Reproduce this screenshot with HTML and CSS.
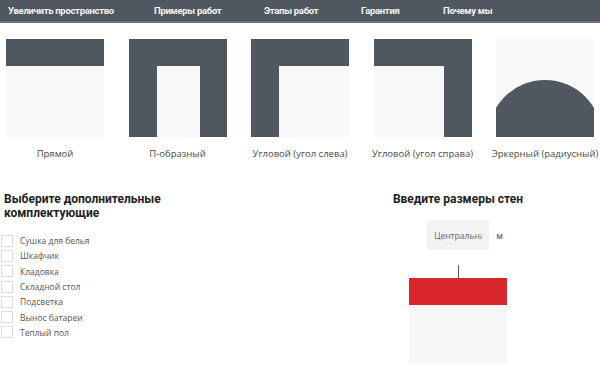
FILE: index.html
```html
<!doctype html>
<html>

<head>
    <title>Балконы</title>
    <link rel="stylesheet" href="styles.css">
</head>

<body>
    <nav class="topnav">
        <a>Увеличить пространство</a>
        <a>Примеры работ</a>
        <a>Этапы работ</a>
        <a>Гарантия</a>
        <a>Почему мы</a>
    </nav>

    <section class="shapes">
        <div class="shape">
            <svg viewBox="0 0 98 98" width="98" height="98">
                <rect width="98" height="98" fill="#f7f8f8" />
                <rect width="98" height="27" fill="#4f5860" />
            </svg>
            <span>Прямой</span>
        </div>
        <div class="shape">
            <svg viewBox="0 0 98 98" width="98" height="98">
                <rect width="98" height="98" fill="#4f5860" />
                <rect x="28" y="27" width="43" height="71" fill="#f7f8f8" />
            </svg>
            <span>П-образный</span>
        </div>
        <div class="shape">
            <svg viewBox="0 0 98 98" width="98" height="98">
                <rect width="98" height="98" fill="#4f5860" />
                <rect x="28" y="27" width="70" height="71" fill="#f7f8f8" />
            </svg>
            <span>Угловой (угол слева)</span>
        </div>
        <div class="shape">
            <svg viewBox="0 0 98 98" width="98" height="98">
                <rect width="98" height="98" fill="#4f5860" />
                <rect x="0" y="27" width="70" height="71" fill="#f7f8f8" />
            </svg>
            <span>Угловой (угол справа)</span>
        </div>
        <div class="shape">
            <svg viewBox="0 0 98 98" width="98" height="98">
                <rect width="98" height="98" fill="#f7f8f8" />
                <circle cx="49" cy="98" r="57" fill="#4f5860" />
            </svg>
            <span>Эркерный (радиусный)</span>
        </div>
    </section>

    <section class="bottom">
        <div class="extras">
            <h3>Выберите дополнительные комплектующие</h3>
            <label class="check"><i></i>Сушка для белья</label>
            <label class="check"><i></i>Шкафчик</label>
            <label class="check"><i></i>Кладовка</label>
            <label class="check"><i></i>Складной стол</label>
            <label class="check"><i></i>Подсветка</label>
            <label class="check"><i></i>Вынос батареи</label>
            <label class="check"><i></i>Теплый пол</label>
        </div>
        <div class="sizes">
            <h3>Введите размеры стен</h3>
            <div class="size-row">
                <input type="text" placeholder="Центральная">
                <span>м</span>
            </div>
            <div class="plan">
                <div class="tick"></div>
                <div class="wall"></div>
                <div class="floor"></div>
            </div>
        </div>
    </section>
</body>

</html>
```

FILE: styles.css
```css
body,
html {
    padding: 0;
    margin: 0;
    background: #fff;
    overflow: hidden;
}

* {
    font-family: "Open Sans", "Noto Sans", sans-serif;
    box-sizing: border-box;
}

.topnav {
    height: 23px;
    background: #4f5860;
    border-bottom: 2px solid #6b737a;
    display: flex;
    align-items: center;
    padding-left: 8px;
}

.topnav a {
    color: #f4f4f4;
    font-family: Roboto, sans-serif;
    font-size: 9.5px;
    font-weight: 700;
    letter-spacing: -0.3px;
    white-space: nowrap;
}

.topnav a:nth-child(1) { width: 146px; }
.topnav a:nth-child(2) { width: 110px; }
.topnav a:nth-child(3) { width: 97px; }
.topnav a:nth-child(4) { width: 82px; }

.shapes {
    display: grid;
    grid-template-columns: repeat(5, 98px);
    column-gap: 24.5px;
    padding: 16px 0 0 6px;
}

.shape {
    display: flex;
    flex-direction: column;
    align-items: center;
}

.shape svg {
    display: block;
}

.shape span {
    margin-top: 10px;
    font-size: 9.5px;
    color: #4a4a4a;
    white-space: nowrap;
}

.bottom {
    display: flex;
    padding-top: 32px;
}

.extras {
    flex: 0 0 308px;
}

.extras h3,
.sizes h3 {
    margin: 0;
    font-family: Roboto, sans-serif;
    font-size: 12px;
    font-weight: 700;
    line-height: 14px;
    color: #222;
}

.extras h3 {
    padding-left: 4px;
    width: 200px;
    margin-bottom: 13px;
}

.check {
    display: flex;
    align-items: center;
    height: 15.3px;
    font-size: 8.5px;
    color: #555;
}

.check i {
    width: 12px;
    height: 12px;
    margin: 0 7px 0 1px;
    border: 1px solid #ddd;
    background: #fff;
}

.sizes {
    flex: 0 0 300px;
    display: flex;
    flex-direction: column;
    align-items: center;
}

.size-row {
    display: flex;
    align-items: center;
    margin: 14px 0 0 14px;
}

.size-row input {
    width: 62px;
    height: 30px;
    border: none;
    background: #f3f3f3;
    padding: 0 7px;
    font-size: 8.5px;
    color: #666;
    outline: none;
}

.size-row input::placeholder {
    color: #666;
}

.size-row span {
    margin-left: 7px;
    font-size: 9px;
    color: #444;
}

.plan {
    margin-top: 15px;
    display: flex;
    flex-direction: column;
    align-items: center;
}

.tick {
    width: 1px;
    height: 13px;
    background: #555;
}

.wall {
    width: 98px;
    height: 27px;
    background: #d9262b;
}

.floor {
    width: 98px;
    height: 58px;
    background: #f7f7f7;
}
```
